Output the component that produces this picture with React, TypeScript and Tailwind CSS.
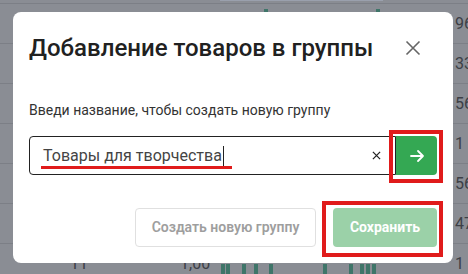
import { FC } from "react";

const rightNums = ["96", "33", "564", "1", "56", "47", "1"];

const Backdrop: FC = () => (
  <div className="absolute inset-0 bg-[#8a8d94]">
    <div className="h-[4px] border-b border-[#7c7f86]" />
    {rightNums.map((n, i) => (
      <div
        key={i}
        className="flex h-[40px] items-center justify-end border-b border-[#7c7f86] text-[16px] text-[#3c3f46]"
      >
        <span className="w-[15px] overflow-hidden whitespace-nowrap pl-[2px]">{n}</span>
      </div>
    ))}
    <div className="absolute left-[264px] top-[9px] h-[4px] w-[4px] bg-[#3f7569]" />
    <div className="absolute left-[376px] top-[9px] h-[4px] w-[4px] bg-[#3f7569]" />
    <div className="absolute left-[220px] top-0 h-[1px] w-[163px] bg-[#9aa0ad]" />
    <div className="absolute left-[70px] top-[256px] text-[16px] leading-none text-[#3c3f46]">11</div>
    <div className="absolute left-[180px] top-[256px] text-[16px] leading-none text-[#3c3f46]">1,00</div>
    {[221, 226, 242, 254, 269, 323, 349, 360, 366, 372].map((x) => (
      <span
        key={x}
        className="absolute top-[264px] h-[10px] w-[4px] bg-[#3f7569]"
        style={{ left: x }}
      />
    ))}
  </div>
);

export default function App() {
  return (
    <div
      className="relative h-[274px] w-[468px] overflow-hidden"
      style={{ fontFamily: "Roboto, 'Noto Sans', sans-serif" }}
    >
      <Backdrop />
      <div className="absolute left-[13px] top-[12px] flex h-[251px] w-[440px] flex-col rounded-[8px] bg-white px-4 pt-[22px]">
        <div className="flex h-[28px] items-center justify-between">
          <h2 className="text-[24px] font-medium leading-[28px] text-[#212121]">
            Добавление товаров в группы
          </h2>
          <button className="mr-[12px] flex h-[24px] w-[24px] items-center justify-center text-[#666]">
            <svg width="16" height="16" viewBox="0 0 16 16" fill="none" stroke="currentColor" strokeWidth="1.6">
              <path d="M1.5 1.5l13 13M14.5 1.5l-13 13" />
            </svg>
          </button>
        </div>
        <p className="mt-[38px] text-[14px] leading-[20px] text-[#333]">
          Введи название, чтобы создать новую группу
        </p>
        <div className="relative mt-[16px] flex h-[39px]">
          <div className="flex flex-1 items-center rounded-l-[4px] border border-[#222] pl-[13px] pr-[14px]">
            <span className="text-[16px] leading-none text-[#444]">Товары для творчества</span>
            <span className="ml-[1px] h-[20px] w-[1px] bg-[#222]" />
            <span className="flex-1" />
            <svg width="9" height="9" viewBox="0 0 10 10" stroke="#222" strokeWidth="1.4">
              <path d="M1 1l8 8M9 1l-8 8" />
            </svg>
          </div>
          <button className="flex w-[41px] items-center justify-center rounded-r-[4px] bg-[#34a853] text-white">
            <svg width="16" height="16" viewBox="0 0 16 16" fill="none" stroke="currentColor" strokeWidth="1.8" strokeLinecap="round" strokeLinejoin="round">
              <path d="M2 8h12M9 3l5 5-5 5" />
            </svg>
          </button>
          <div className="absolute left-[12px] top-[30px] h-[3px] w-[191px] bg-[#e01b1b]" />
          <div className="absolute -top-[6px] left-[360px] h-[53px] w-[54px] border-[4px] border-[#e01b1b]" />
        </div>
        <div className="relative mt-[33px] flex justify-end gap-[17px]">
          <button className="h-[39px] w-[181px] rounded-[4px] border border-[#e0e0e0] text-[14px] font-semibold text-[#9e9e9e]">
            Создать новую группу
          </button>
          <button className="h-[39px] w-[104px] rounded-[4px] bg-[#9bd1a8] text-[14px] font-bold text-white">
            Сохранить
          </button>
          <div className="absolute -top-[7px] left-[293px] h-[56px] w-[121px] border-[4px] border-[#e01b1b]" />
        </div>
      </div>
    </div>
  );
}
